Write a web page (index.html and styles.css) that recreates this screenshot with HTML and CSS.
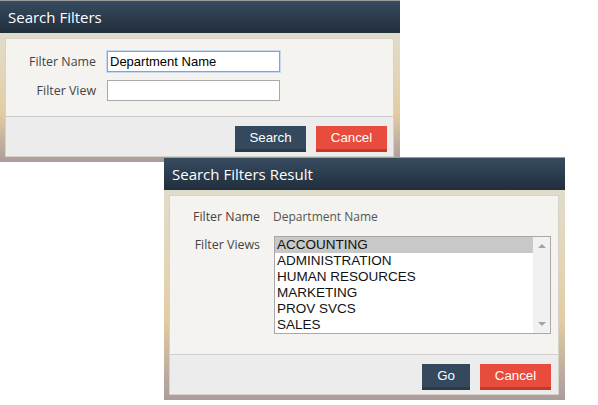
FILE: index.html
```html
<!DOCTYPE html>
<html>
<head>
<meta charset="utf-8">
<title>Search Filters</title>
<link rel="stylesheet" href="styles.css">
</head>
<body>
<div class="desktop">
  <section class="dialog dialog-search">
    <header class="dialog-header">Search Filters</header>
    <div class="dialog-frame">
      <div class="panel">
        <div class="panel-body form-grid">
          <label class="field-label">Filter Name</label>
          <div class="text-input focused">Department Name</div>
          <label class="field-label">Filter View</label>
          <div class="text-input"></div>
        </div>
        <div class="panel-footer">
          <button class="btn btn-primary btn-wide">Search</button>
          <button class="btn btn-danger btn-wide">Cancel</button>
        </div>
      </div>
    </div>
  </section>

  <section class="dialog dialog-result">
    <header class="dialog-header">Search Filters Result</header>
    <div class="dialog-frame">
      <div class="panel">
        <div class="panel-body result-grid">
          <span class="field-label">Filter Name</span>
          <span class="field-value">Department Name</span>
          <span class="field-label">Filter Views</span>
          <div class="listbox">
            <ul class="list-items">
              <li class="selected">ACCOUNTING</li>
              <li>ADMINISTRATION</li>
              <li>HUMAN RESOURCES</li>
              <li>MARKETING</li>
              <li>PROV SVCS</li>
              <li>SALES</li>
            </ul>
            <div class="scrollbar">
              <span class="arrow arrow-up"></span>
              <span class="arrow arrow-down"></span>
            </div>
          </div>
        </div>
        <div class="panel-footer">
          <button class="btn btn-primary btn-narrow">Go</button>
          <button class="btn btn-danger btn-wide">Cancel</button>
        </div>
      </div>
    </div>
  </section>
</div>
</body>
</html>
```

FILE: styles.css
```css
* { box-sizing: border-box; }

html, body {
  margin: 0;
  padding: 0;
  background: #ffffff;
}

.desktop {
  position: relative;
  width: 598px;
  height: 405px;
  overflow: hidden;
}

.dialog {
  position: absolute;
  display: flex;
  flex-direction: column;
}

.dialog-search {
  left: 0;
  top: 0;
  width: 400px;
}

.dialog-result {
  left: 164px;
  top: 157px;
  width: 401px;
}

.dialog-header {
  height: 33px;
  border-top: 1px solid #9c9c9c;
  background: linear-gradient(#374b61, #212e3c);
  color: #ffffff;
  font-family: "Open Sans", "DejaVu Sans", sans-serif;
  font-size: 15px;
  line-height: 32px;
  padding-left: 8px;
}

.dialog-frame {
  padding: 5px 6px 5px 5px;
  background: linear-gradient(#e0dccb 0%, #e3d5b6 35%, #e2cca2 62%, #aa9c9d 100%);
}

.panel {
  border: 1px solid #d6d2c6;
  background: #f4f3ef;
  display: flex;
  flex-direction: column;
}

.panel-body {
  display: grid;
  grid-template-columns: 90px 1fr;
  column-gap: 11px;
  align-items: center;
}

.form-grid {
  padding: 12px 0 15px 0;
  row-gap: 8px;
}

.result-grid {
  padding: 12px 0 20px 0;
  row-gap: 10px;
  column-gap: 13px;
  align-items: start;
}

.field-label {
  text-align: right;
  font-family: "Open Sans", "DejaVu Sans", sans-serif;
  font-size: 12.4px;
  color: #444444;
  line-height: 18px;
}

.field-value {
  font-family: "Open Sans", "DejaVu Sans", sans-serif;
  font-size: 12px;
  color: #555555;
  line-height: 18px;
}

.text-input {
  width: 173px;
  height: 21px;
  border: 1px solid #a9a9a9;
  background: #ffffff;
  font-family: "Liberation Sans", Arial, sans-serif;
  font-size: 13px;
  line-height: 19px;
  padding-left: 2px;
  color: #000000;
}

.text-input.focused {
  border-color: #7ea4dc;
  box-shadow: 0 0 0 1px #c6d8f2;
}

.listbox {
  margin-left: 1px;
  width: 277px;
  height: 98px;
  border: 1px solid #a9a9a9;
  background: #ffffff;
  display: flex;
}

.list-items {
  list-style: none;
  margin: 0;
  padding: 0;
  flex: 1;
}

.list-items li {
  height: 16px;
  line-height: 16px;
  padding-left: 2px;
  font-family: "Liberation Sans", Arial, sans-serif;
  font-size: 13.5px;
  color: #111111;
}

.list-items li.selected {
  background: #c8c8c8;
}

.scrollbar {
  width: 17px;
  background: #f1f1f1;
  display: flex;
  flex-direction: column;
  justify-content: space-between;
  align-items: center;
  padding: 7px 0 7px 0;
}

.arrow {
  width: 0;
  height: 0;
  border-left: 4px solid transparent;
  border-right: 4px solid transparent;
}

.arrow-up {
  border-bottom: 4px solid #a3a3a3;
}

.arrow-down {
  border-top: 4px solid #a3a3a3;
}

.panel-footer {
  border-top: 1px solid #cdcdcd;
  background: #ececec;
  display: flex;
  justify-content: flex-end;
  gap: 10px;
  padding: 9px 6px 4px 0;
}

.dialog-result .panel-footer {
  padding-right: 7px;
}

.btn {
  height: 26px;
  border: none;
  border-bottom: 3px solid;
  padding: 0;
  margin: 0;
  font-family: "Liberation Sans", Arial, sans-serif;
  font-size: 13.3px;
  color: #ffffff;
  line-height: 23px;
}

.btn-wide { width: 71px; }
.btn-narrow { width: 48px; }

.btn-primary {
  background: #34495e;
  border-bottom-color: #2a3a4a;
}

.btn-danger {
  background: #e74c3c;
  border-bottom-color: #c0392b;
}
```
